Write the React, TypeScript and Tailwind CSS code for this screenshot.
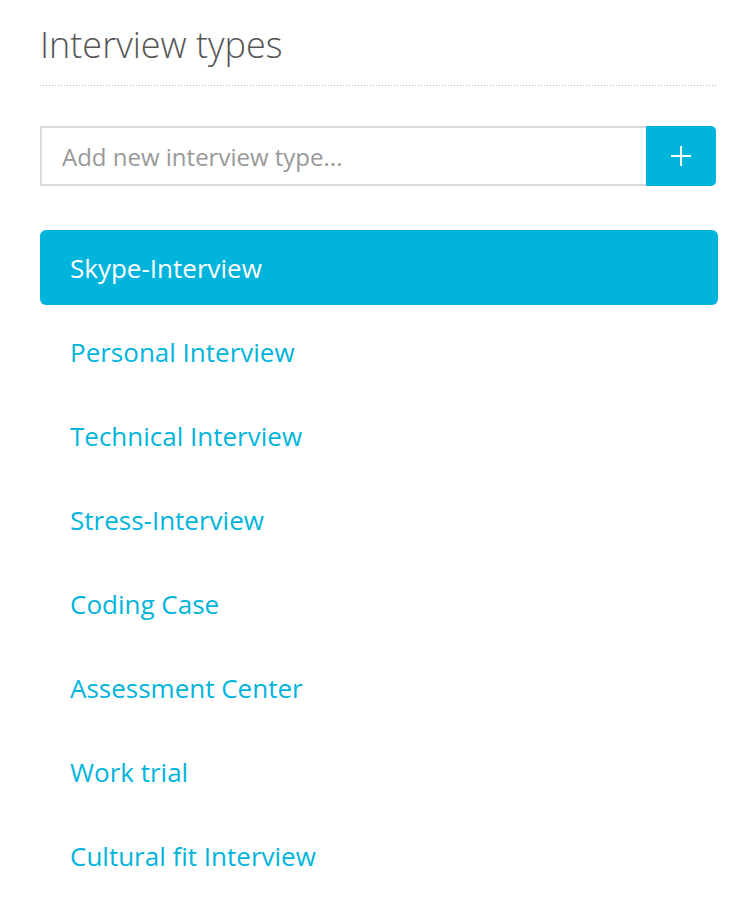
const types = [
  'Skype-Interview',
  'Personal Interview',
  'Technical Interview',
  'Stress-Interview',
  'Coding Case',
  'Assessment Center',
  'Work trial',
  'Cultural fit Interview',
];

const App = () => {
  return (
    <div className="min-h-screen bg-white font-['Open_Sans',sans-serif]">
      <div className="ml-10 w-[678px] pt-[25px]">
        <h1 className="text-[36px] font-light leading-[40px] text-[#555]">
          Interview types
        </h1>
        <div className="mt-5 h-px bg-[linear-gradient(to_right,#b5b5b5_34%,transparent_0)] bg-[length:3px_1px] bg-repeat-x" />

        <form className="mt-10 flex w-[676px]" onSubmit={(e) => e.preventDefault()}>
          <input
            type="text"
            placeholder="Add new interview type..."
            className="h-[60px] flex-1 border-2 border-r-0 border-[#dadada] px-5 text-[24px] text-[#555] outline-none placeholder:text-[#999]"
          />
          <button
            type="submit"
            className="flex h-[60px] w-[70px] items-center justify-center rounded-r-[5px] bg-[#00b4dc] text-white"
          >
            <svg width="22" height="22" viewBox="0 0 22 22" fill="none">
              <path d="M11 1v20M1 11h20" stroke="white" strokeWidth="2" />
            </svg>
          </button>
        </form>

        <ul className="mt-[44px] flex flex-col gap-[9px]">
          {types.map((t, i) => (
            <li
              key={t}
              className={
                i === 0
                  ? 'flex h-[75px] items-center rounded-[6px] bg-[#00b4dc] px-[30px] pt-[2px] text-[26px] text-white'
                  : 'flex h-[75px] items-center px-[30px] pt-[2px] text-[26px] text-[#00b4dc]'
              }
            >
              {t}
            </li>
          ))}
        </ul>
      </div>
    </div>
  );
};

export default App;
